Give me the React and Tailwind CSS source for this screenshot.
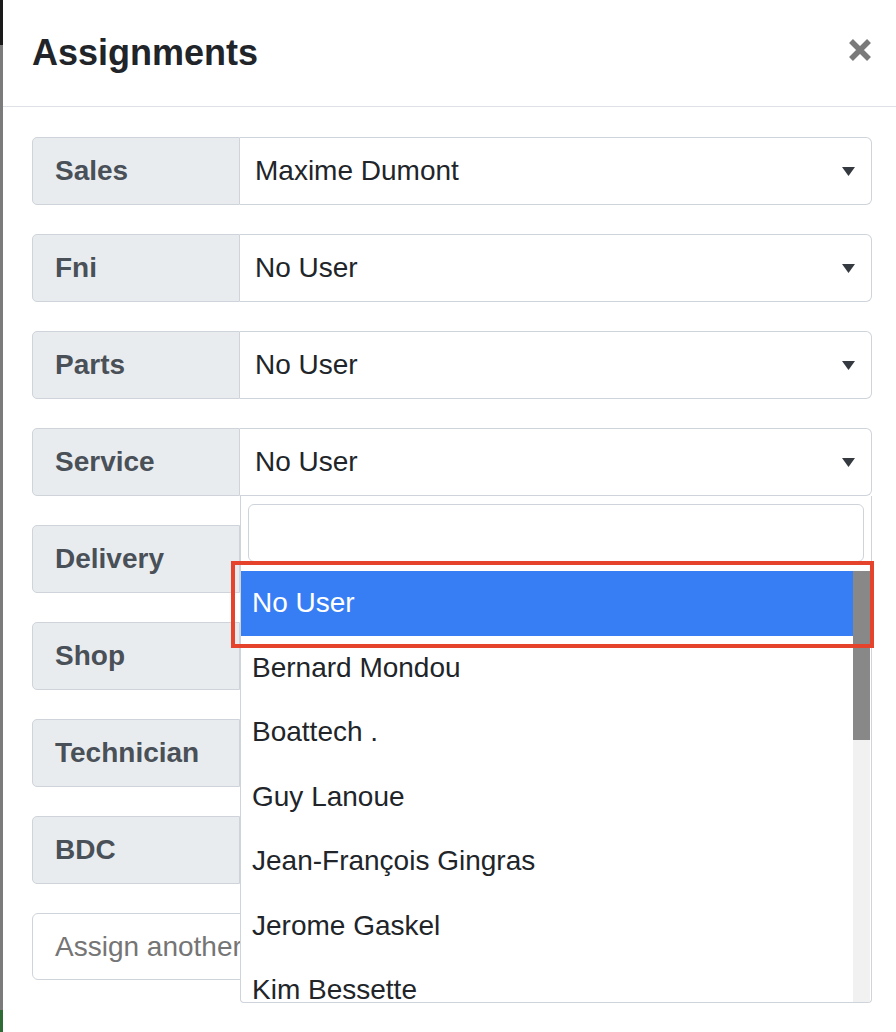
import React from 'react';

const roles = ['Sales', 'Fni', 'Parts', 'Service', 'Delivery', 'Shop', 'Technician', 'BDC'];

const values = {
  Sales: 'Maxime Dumont',
  Fni: 'No User',
  Parts: 'No User',
  Service: 'No User',
};

const users = [
  'No User',
  'Bernard Mondou',
  'Boattech .',
  'Guy Lanoue',
  'Jean-François Gingras',
  'Jerome Gaskel',
  'Kim Bessette',
];

const Caret = () => (
  <svg width="13" height="9" viewBox="0 0 13 9" className="shrink-0">
    <polygon points="0,0 13,0 6.5,9" fill="#343a40" />
  </svg>
);

const UserDropdown = () => (
  <div className="absolute left-0 right-0 top-full z-10 h-[507px] bg-white border border-[#ced4da] border-t-0 rounded-b-[4px] flex flex-col">
    {/* 검색창 */}
    <div className="px-[7px] pt-[8px]">
      <div className="h-[58px] border border-[#ced4da] rounded-[6px] bg-white" />
    </div>
    <div className="flex flex-1 mt-[9px] overflow-hidden">
      <div className="flex-1">
        {users.map((u, i) => (
          <div
            key={u}
            className={
              i === 0
                ? 'h-[64.5px] flex items-center pl-[11px] bg-[#377ef5] text-white'
                : 'h-[64.5px] flex items-center pl-[11px] text-[#212529]'
            }
          >
            <span className="text-[28px] leading-none whitespace-nowrap">{u}</span>
          </div>
        ))}
      </div>
      {/* 스크롤바 */}
      <div className="w-[17px] bg-[#f1f1f1] mr-px">
        <div className="h-[169px] bg-[#888888]" />
      </div>
    </div>
    {/* 강조 표시 */}
    <div className="absolute left-[-10px] top-[65px] w-[643px] h-[87px] border-[4px] border-[#e5432c] pointer-events-none" />
  </div>
);

const AssignmentRow = ({ role }) => {
  const value = values[role];
  return (
    <div className="flex h-[68px] mb-[29px]">
      <div className="w-[208px] shrink-0 flex items-center pl-[22px] bg-[#e9ecef] border border-[#ced4da] rounded-l-[5px]">
        <span className="text-[28px] font-bold leading-none text-[#495057]">{role}</span>
      </div>
      <div className="relative flex-1">
        {value && (
          <div className="h-full flex items-center justify-between pl-[15px] pr-[16px] bg-white border border-l-0 border-[#ced4da] rounded-r-[6px]">
            <span className="text-[28px] leading-none text-[#212529]">{value}</span>
            <Caret />
          </div>
        )}
        {role === 'Service' && <UserDropdown />}
      </div>
    </div>
  );
};

export default function App() {
  return (
    <div
      className="flex w-[896px] h-[1032px] overflow-hidden bg-white"
      style={{ fontFamily: '"Liberation Sans", Arial, sans-serif' }}
    >
      <div className="w-[3px] shrink-0 flex flex-col bg-[#7b7b7b]">
        <div className="h-[45px] bg-[#1a1a1a]" />
        <div className="flex-1" />
        <div className="h-[22px] bg-[#2f6b34]" />
      </div>
      <div className="relative flex-1 bg-white">
        {/* 모달 헤더 */}
        <div className="h-[107px] flex items-center justify-between pl-[29px] pr-[24px] border-b border-[#dee2e6]">
          <h1 className="text-[36px] font-bold leading-none text-[#212529]">Assignments</h1>
          <svg width="24" height="24" viewBox="0 0 24 24" className="mb-[6px]">
            <path d="M3 3 L21 21 M21 3 L3 21" stroke="#7a7a7a" strokeWidth="5.5" strokeLinecap="butt" />
          </svg>
        </div>

        {/* 모달 바디 */}
        <div className="pt-[30px] pl-[29px] pr-[24px]">
          {roles.map(r => (
            <AssignmentRow key={r} role={r} />
          ))}
          <div className="h-[67px] mt-[1px] flex items-center pl-[22px] border border-[#ced4da] rounded-[6px]">
            <span className="text-[28px] leading-none text-[#757575]">Assign another...</span>
          </div>
        </div>
      </div>
    </div>
  );
}
